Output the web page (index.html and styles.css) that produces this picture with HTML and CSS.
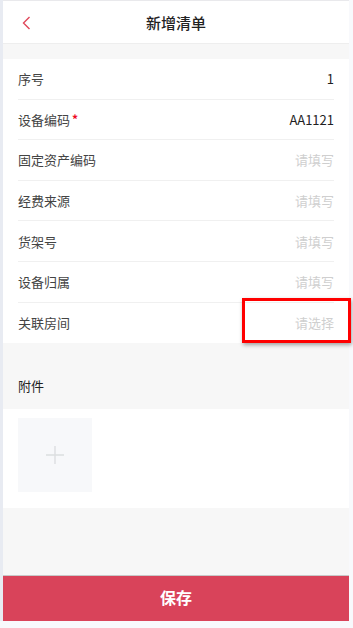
FILE: index.html
```html
<!DOCTYPE html>
<html lang="zh-CN">
<head>
    <meta charset="UTF-8">
    <meta name="viewport" content="width=device-width, initial-scale=1.0">
    <title>新增清单</title>
    <link rel="stylesheet" href="styles.css">
</head>
<body>
    <div class="page">
        <header class="nav">
            <span class="back">
                <svg width="9" height="14" viewBox="0 0 9 14"><polyline points="7.5,1 1.5,7 7.5,13" fill="none" stroke="#e0475a" stroke-width="1.4"/></svg>
            </span>
            <h1>新增清单</h1>
        </header>

        <section class="form">
            <div class="row"><span class="label">序号</span><span class="value">1</span></div>
            <div class="row"><span class="label">设备编码<i class="req">*</i></span><span class="value">AA1121</span></div>
            <div class="row"><span class="label">固定资产编码</span><span class="value empty">请填写</span></div>
            <div class="row"><span class="label">经费来源</span><span class="value empty">请填写</span></div>
            <div class="row"><span class="label">货架号</span><span class="value empty">请填写</span></div>
            <div class="row"><span class="label">设备归属</span><span class="value empty">请填写</span></div>
            <div class="row last"><span class="label">关联房间</span><span class="value empty">请选择</span></div>
        </section>

        <h2 class="section-title">附件</h2>
        <section class="attach">
            <div class="upload">
                <svg width="20" height="20" viewBox="0 0 20 20"><path d="M10 1v18M1 10h18" stroke="#dcdee0" stroke-width="1.4"/></svg>
            </div>
        </section>

        <footer class="footer">
            <button class="save">保存</button>
        </footer>

        <div class="mark"></div>
    </div>
</body>
</html>
```

FILE: styles.css
```css
body {
    margin: 0;
    padding: 0;
    background-color: #f8f9fc;
    border-left: 3px solid #e8ebf2;
    font-family: "Noto Sans CJK SC", "Noto Sans", sans-serif;
}

.page {
    position: relative;
    margin-right: 4px;
    height: 621px;
    display: flex;
    flex-direction: column;
    background-color: #f7f7f7;
}

.nav {
    border-top: 1px solid #e9e9ec;
    border-bottom: 1px solid #eeeeee;
    box-sizing: border-box;
    height: 44px;
    background-color: #fff;
    display: flex;
    align-items: center;
    justify-content: center;
    position: relative;
}

.nav h1 {
    margin: 0;
    font-size: 15px;
    font-weight: 500;
    color: #222;
}

.back {
    position: absolute;
    left: 19px;
    top: 15px;
    line-height: 0;
}

.form {
    margin-top: 15px;
    background-color: #fff;
}

.row {
    height: 40.6px;
    box-sizing: border-box;
    margin: 0 15px 0 15px;
    display: flex;
    align-items: center;
    justify-content: space-between;
    border-bottom: 1px solid #f0f0f0;
    font-size: 13px;
}

.row.last {
    border-bottom: none;
}

.label {
    color: #444;
}

.req {
    font-style: normal;
    color: #ee0a24;
    margin-left: 2px;
    position: relative;
    top: -1px;
    font-size: 12px;
    font-weight: bold;
}

.value {
    color: #1f1f1f;
}

.value.empty {
    color: #cfcfcf;
}

.section-title {
    margin: 0;
    height: 66px;
    padding: 0 15px;
    box-sizing: border-box;
    display: flex;
    align-items: flex-end;
    padding-bottom: 14px;
    font-size: 13px;
    font-weight: normal;
    color: #222;
}

.attach {
    background-color: #fff;
    padding: 9px 15px 16px;
}

.upload {
    width: 74px;
    height: 74px;
    background-color: #f7f8fa;
    display: flex;
    align-items: center;
    justify-content: center;
}

.footer {
    margin-top: auto;
    border-top: 1px solid #c8c8c8;
}

.save {
    display: block;
    width: 100%;
    height: 45px;
    padding: 0 0 3px;
    border: none;
    background-color: #d9435a;
    color: #fff;
    font-family: inherit;
    font-size: 16px;
    font-weight: bold;
}

.mark {
    position: absolute;
    left: 239px;
    top: 298px;
    width: 103px;
    height: 39px;
    border: 3px solid #ff0000;
    box-shadow: 1px 2px 4px rgba(0, 0, 0, 0.35);
}
```
